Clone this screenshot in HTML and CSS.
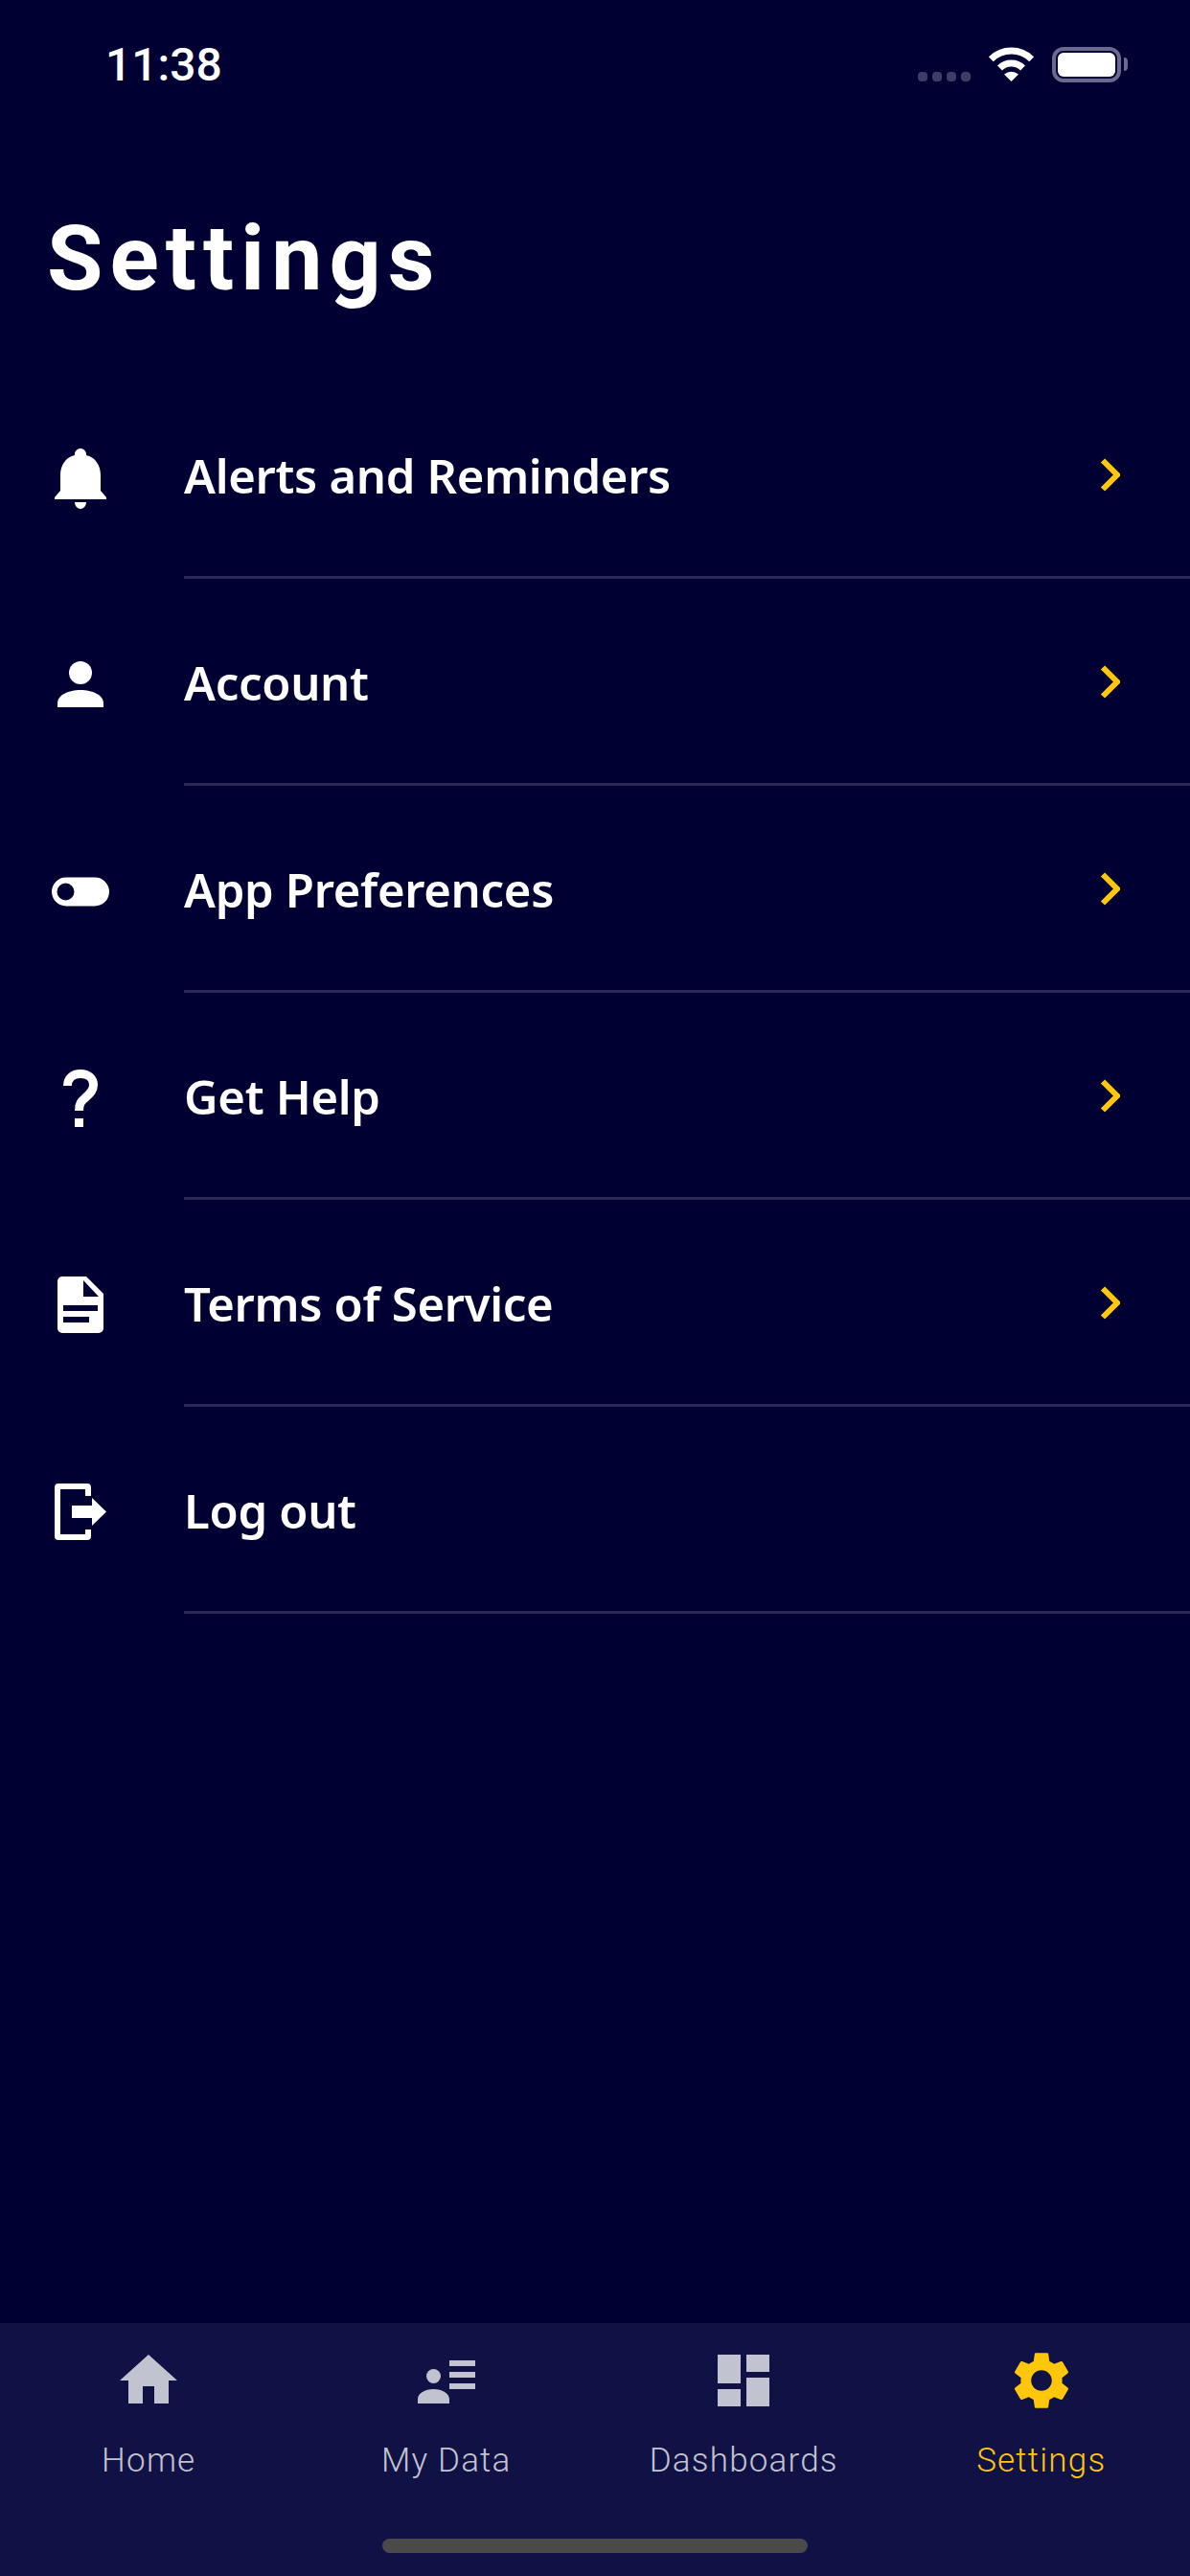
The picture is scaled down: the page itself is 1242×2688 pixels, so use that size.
FILE: index.html
```html
<!DOCTYPE html>
<html>
<head>
    <title>Settings</title>
    <link rel="stylesheet" href="styles.css">
</head>
<body>
    <div class="phone">
        <div class="status-bar">
            <span class="time">11:38</span>
            <div class="status-icons">
                <div class="signal"><i></i><i></i><i></i><i></i></div>
                <svg class="wifi" width="47" height="36" viewBox="0 0 47 36">
                    <path d="M2.3 12.8A30 30 0 0 1 44.7 12.8" fill="none" stroke="#fff" stroke-width="7"/>
                    <path d="M11.5 22A17 17 0 0 1 35.5 22" fill="none" stroke="#fff" stroke-width="7"/>
                    <path d="M23.5 36L16 28.5Q23.5 23 31 28.5z" fill="#fff"/>
                </svg>
                <div class="battery"><div class="battery-level"></div></div>
                <div class="battery-nub"></div>
            </div>
        </div>

        <h1 class="title">Settings</h1>

        <ul class="menu">
            <li class="menu-row">
                <svg class="menu-icon" viewBox="0 0 84 84"><path transform="translate(15 14)" d="M27 0c3 0 6 2.500 6 5.500V7C42 9 48 17 48 28v16l6 7v2H0v-2l6-7V28C6 17 12 9 21 7V5.500C21 2.500 24 0 27 0zM21 56h12c0 4-3 7-6 7s-6-3-6-7z"/></svg>
                <div class="menu-body"><span class="menu-label">Alerts and Reminders</span>
                    <svg class="chevron" width="21" height="35" viewBox="0 0 21 35"><path d="M3 2.500L18 17.500L3 32.500" /></svg>
                </div>
            </li>
            <li class="menu-row">
                <svg class="menu-icon" viewBox="0 0 84 84"><circle cx="42" cy="32" r="12"/><path d="M18 68v-4C18 55 30 50 42 50s24 5 24 14v4z"/></svg>
                <div class="menu-body"><span class="menu-label">Account</span>
                    <svg class="chevron" width="21" height="35" viewBox="0 0 21 35"><path d="M3 2.500L18 17.500L3 32.500" /></svg>
                </div>
            </li>
            <li class="menu-row">
                <svg class="menu-icon" viewBox="0 0 84 84"><path fill-rule="evenodd" d="M27 29.500h30a15 15 0 0 1 0 30H27a15 15 0 0 1 0-30zM26.500 35.500a9 9 0 1 0 0 18a9 9 0 1 0 0-18z"/></svg>
                <div class="menu-body"><span class="menu-label">App Preferences</span>
                    <svg class="chevron" width="21" height="35" viewBox="0 0 21 35"><path d="M3 2.500L18 17.500L3 32.500" /></svg>
                </div>
            </li>
            <li class="menu-row">
                <svg class="menu-icon" viewBox="0 0 84 84"><path d="M28.500 31C28.500 23 34 18.500 42 18.500C51 18.500 55.500 24 55.500 30C55.500 37 50.500 40 46.500 44C43 47 40.500 49 40.500 57" fill="none" stroke="#fff" stroke-width="9"/><rect x="36" y="65" width="9" height="9"/></svg>
                <div class="menu-body"><span class="menu-label">Get Help</span>
                    <svg class="chevron" width="21" height="35" viewBox="0 0 21 35"><path d="M3 2.500L18 17.500L3 32.500" /></svg>
                </div>
            </li>
            <li class="menu-row">
                <svg class="menu-icon" viewBox="0 0 84 84"><path fill-rule="evenodd" d="M23 14H48L66 32V68a5 5 0 0 1-5 5H23a5 5 0 0 1-5-5V19a5 5 0 0 1 5-5zM45 18V35H61zM24 44V50H60V44zM24 56V62H51V56z"/></svg>
                <div class="menu-body"><span class="menu-label">Terms of Service</span>
                    <svg class="chevron" width="21" height="35" viewBox="0 0 21 35"><path d="M3 2.500L18 17.500L3 32.500" /></svg>
                </div>
            </li>
            <li class="menu-row">
                <svg class="menu-icon" viewBox="0 0 84 84"><path d="M19 14H49a4 4 0 0 1 4 4V27H47V20H21V67H47V62H53V69a4 4 0 0 1-4 4H19a4 4 0 0 1-4-4V18a4 4 0 0 1 4-4z"/><path d="M33 37H54V29L69 43.500L54 58V50H33z"/></svg>
                <div class="menu-body"><span class="menu-label">Log out</span></div>
            </li>
        </ul>

        <nav class="tab-bar">
            <div class="tab">
                <svg class="tab-icon" viewBox="0 0 24 24"><path d="M10 20v-6h4v6h5v-8h3L12 3 2 12h3v8z"/></svg>
                <span class="tab-label">Home</span>
            </div>
            <div class="tab">
                <svg class="tab-icon" viewBox="0 0 24 24"><circle cx="7.500" cy="10.500" r="2.500"/><path d="M2 20v-1.500C2 16.500 4.500 15 7.500 15s5.500 1.500 5.500 3.500V20zM13 5h9v2h-9zM13 9h9v2h-9zM13 13h9v2h-9z"/></svg>
                <span class="tab-label">My Data</span>
            </div>
            <div class="tab">
                <svg class="tab-icon" viewBox="0 0 24 24"><path d="M3 13h8V3H3v10zm0 8h8v-6H3v6zm10 0h8V11h-8v10zm0-18v6h8V3h-8z"/></svg>
                <span class="tab-label">Dashboards</span>
            </div>
            <div class="tab active">
                <svg class="tab-icon" viewBox="0 0 24 24"><path d="M19.140 12.940c.04-.3.06-.61.06-.94 0-.32-.02-.64-.07-.94l2.030-1.580c.18-.14.23-.41.12-.61l-1.920-3.320c-.12-.22-.37-.29-.59-.22l-2.390.96c-.5-.38-1.030-.7-1.620-.94l-.36-2.540c-.04-.24-.24-.41-.48-.41h-3.840c-.24 0-.43.17-.47.41l-.36 2.540c-.59.24-1.130.57-1.620.94l-2.390-.96c-.22-.08-.47 0-.59.22L2.740 8.870c-.12.21-.08.47.12.61l2.030 1.580c-.05.3-.09.63-.09.94s.02.64.07.94l-2.030 1.580c-.18.14-.23.41-.12.61l1.920 3.320c.12.22.37.29.59.22l2.390-.96c.5.38 1.030.7 1.620.94l.36 2.540c.05.24.24.41.48.41h3.840c.24 0 .44-.17.47-.41l.36-2.540c.59-.24 1.130-.56 1.620-.94l2.390.96c.22.08.47 0 .59-.22l1.920-3.320c.12-.22.07-.47-.12-.61l-2.010-1.580zM12 15.600c-1.980 0-3.600-1.620-3.600-3.600s1.620-3.600 3.600-3.600 3.600 1.620 3.600 3.600-1.620 3.600-3.600 3.600z"/></svg>
                <span class="tab-label">Settings</span>
            </div>
            <div class="home-indicator"></div>
        </nav>
    </div>
</body>
</html>
```

FILE: styles.css
```css
* {
    box-sizing: border-box;
}
html, body {
    margin: 0;
    padding: 0;
}
body {
    background-color: #000032;
    color: white;
    font-family: "Noto Sans", sans-serif;
}
.phone {
    width: 1242px;
    height: 2688px;
    display: flex;
    flex-direction: column;
    overflow: hidden;
}

/* status bar */
.status-bar {
    height: 100px;
    display: flex;
    justify-content: space-between;
    padding: 41px 65px 0 110px;
}
.time {
    font-family: Roboto, sans-serif;
    font-size: 48px;
    font-weight: 500;
    line-height: 54px;
    height: 54px;
}
.status-icons {
    display: flex;
    align-items: flex-start;
    padding-top: 8px;
}
.signal {
    display: flex;
    gap: 5px;
    margin-top: 26px;
    margin-right: 19px;
}
.signal i {
    width: 10px;
    height: 10px;
    border-radius: 4px;
    background-color: #3d3d66;
}
.battery {
    width: 72px;
    height: 37px;
    margin-left: 19px;
    padding: 2px;
    border: 4px solid #6a6a90;
    border-radius: 12px;
}
.battery-level {
    height: 100%;
    background-color: white;
    border-radius: 6px;
}
.battery-nub {
    width: 4px;
    height: 14px;
    margin: 11px 0 0 3px;
    background-color: #6a6a90;
    border-radius: 0 7px 7px 0;
}

/* page title */
.title {
    margin: 0;
    padding: 114px 0 0 49px;
    height: 288px;
    font-family: Roboto, sans-serif;
    font-size: 95px;
    font-weight: 700;
    line-height: 112px;
    letter-spacing: 7px;
}

/* menu */
.menu {
    list-style: none;
    margin: 0;
    padding: 0;
    flex: 1;
}
.menu-row {
    height: 216px;
    display: flex;
    align-items: stretch;
}
.menu-icon {
    width: 84px;
    height: 84px;
    margin: 66px 66px 0 42px;
    flex: none;
    fill: white;
}
.menu-body {
    flex: 1;
    display: flex;
    align-items: center;
    justify-content: space-between;
    padding-right: 73px;
    border-bottom: 3px solid #2a2a55;
}
.menu-label {
    padding-top: 3px;
    font-size: 49px;
    font-weight: 600;
    line-height: 68px;
    letter-spacing: -0.3px;
}
.chevron {
    margin-top: 2px;
    fill: none;
    stroke: #ffc60a;
    stroke-width: 6;
}

/* bottom tabs */
.tab-bar {
    position: relative;
    height: 264px;
    flex: none;
    display: grid;
    grid-template-columns: repeat(4, 1fr);
    background-color: #101145;
    padding-top: 24px;
}
.tab {
    display: flex;
    flex-direction: column;
    align-items: center;
    color: #c2c3d1;
    fill: #c2c3d1;
}
.tab.active {
    color: #ffc60a;
    fill: #ffc60a;
}
.tab-icon {
    width: 72px;
    height: 72px;
}
.tab-label {
    margin-top: 26px;
    font-family: Roboto, sans-serif;
    font-size: 35px;
    font-weight: 300;
    line-height: 44px;
    letter-spacing: 1.2px;
}
.home-indicator {
    position: absolute;
    left: 399px;
    bottom: 24px;
    width: 444px;
    height: 15px;
    background-color: #4a4a4a;
    border-radius: 8px;
}
```
